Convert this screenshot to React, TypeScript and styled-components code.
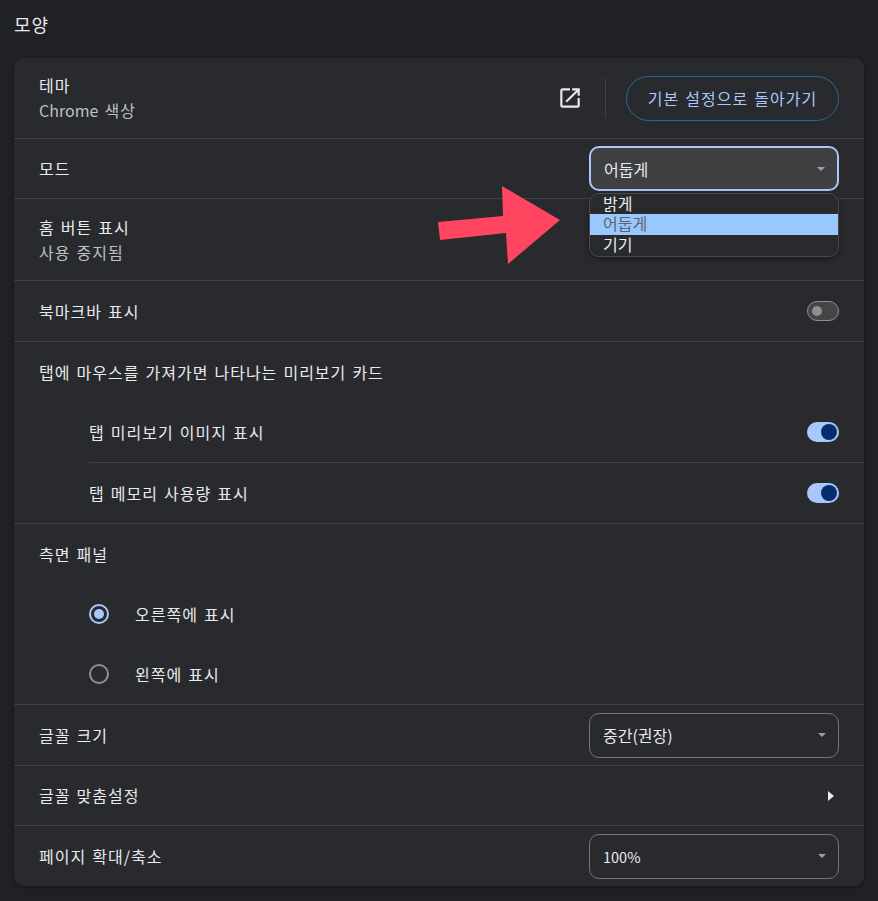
import React, { FC } from 'react';
import styled, { createGlobalStyle } from 'styled-components';

const GlobalStyle = createGlobalStyle`
  html, body {
    margin: 0;
    padding: 0;
    background: #202124;
  }
  body {
    font-family: "Noto Sans CJK KR", "Noto Sans", sans-serif;
    color: #e8eaed;
    font-size: 16px;
    letter-spacing: 1px;
    word-spacing: 1.5px;
  }
`;

const Page = styled.div`
  width: 878px;
  height: 901px;
  padding: 0 14px;
  box-sizing: border-box;
  overflow: hidden;
`;

const PageTitle = styled.h2`
  margin: 0;
  height: 58px;
  padding-top: 10px;
  box-sizing: border-box;
  font-size: 18px;
  line-height: 28px;
  font-weight: 400;
  color: #e8eaed;
`;

const Card = styled.section`
  position: relative;
  width: 850px;
  background: #292a2d;
  border-radius: 10px;
  box-shadow: 0 1px 3px 1px rgba(0, 0, 0, 0.2);
`;

const Row = styled.div<{ $height: number; $indent?: boolean; $nested?: boolean; $noBorder?: boolean }>`
  display: flex;
  align-items: center;
  justify-content: space-between;
  box-sizing: border-box;
  height: ${(props) => props.$height}px;
  margin-left: ${(props) => (props.$nested ? '75px' : '0')};
  padding-left: ${(props) => (props.$nested ? '0' : props.$indent ? '75px' : '25px')};
  padding-right: 25px;
  border-bottom: ${(props) => (props.$noBorder ? '0' : '1px solid #3f4042')};
`;

const Label = styled.div`
  font-size: 16px;
  line-height: 25px;
  color: #e8eaed;
`;

const SubLabel = styled.div`
  font-size: 16px;
  line-height: 25px;
  color: #bdc1c6;
`;

const LatinText = styled.span`
  letter-spacing: 0;
`;

const Actions = styled.div`
  display: flex;
  align-items: center;
`;

const IconButton = styled.div`
  display: flex;
  width: 26px;
  height: 26px;
  margin-right: 22px;
`;

const Divider = styled.div`
  width: 1px;
  height: 40px;
  margin-right: 20px;
  background: #3f4042;
`;

const OutlineButton = styled.button`
  width: 213px;
  height: 45px;
  padding: 0;
  border: 1px solid #1f6f92;
  border-radius: 23px;
  background: transparent;
  color: #a8c7fa;
  font-family: inherit;
  font-size: 16px;
  letter-spacing: 1px;
  word-spacing: 1.5px;
`;

const Select = styled.div<{ $open?: boolean; $latin?: boolean }>`
  display: flex;
  align-items: center;
  justify-content: space-between;
  box-sizing: border-box;
  width: 250px;
  height: 45px;
  padding: 0 12px 0 13px;
  border: ${(props) => (props.$open ? '2px solid #a8c7fa' : '1px solid #747578')};
  border-radius: 10px;
  background: ${(props) => (props.$open ? '#3f4042' : 'transparent')};
  font-size: ${(props) => (props.$latin ? '14.5px' : '16px')};
  letter-spacing: 0;
  color: #e8eaed;
`;

const Caret = styled.span`
  width: 0;
  height: 0;
  border-left: 4.5px solid transparent;
  border-right: 4.5px solid transparent;
  border-top: 4px solid #9aa0a6;
`;

const Popup = styled.ul`
  position: absolute;
  left: 575px;
  top: 135px;
  width: 250px;
  height: 64px;
  margin: 0;
  padding: 0;
  box-sizing: border-box;
  list-style: none;
  background: #292a2d;
  border: 1px solid #4a4b4e;
  border-radius: 10px;
  box-shadow: 0 2px 6px rgba(0, 0, 0, 0.35);
`;

const PopupItem = styled.li<{ $selected?: boolean }>`
  height: ${(props) => (props.$selected ? '21px' : '20px')};
  padding-left: 13px;
  font-size: 16px;
  line-height: 19px;
  letter-spacing: 0;
  background: ${(props) => (props.$selected ? '#99c8ff' : 'transparent')};
  color: ${(props) => (props.$selected ? '#5f6368' : '#e8eaed')};
`;

const ArrowMark = styled.svg`
  position: absolute;
  left: 424px;
  top: 126px;
`;

const Toggle = styled.div<{ $on?: boolean }>`
  display: flex;
  align-items: center;
  justify-content: ${(props) => (props.$on ? 'flex-end' : 'flex-start')};
  box-sizing: border-box;
  width: 32px;
  height: 20px;
  padding: ${(props) => (props.$on ? '0 2px' : '0 4px')};
  border-radius: 10px;
  border: ${(props) => (props.$on ? '0' : '1px solid #8e918f')};
  background: ${(props) => (props.$on ? '#a8c7fa' : '#444547')};
`;

const Knob = styled.span<{ $on?: boolean }>`
  width: ${(props) => (props.$on ? '16px' : '10px')};
  height: ${(props) => (props.$on ? '16px' : '10px')};
  border-radius: 50%;
  background: ${(props) => (props.$on ? '#062e6f' : '#8e918f')};
`;

const RadioRow = styled.div<{ $last?: boolean }>`
  display: flex;
  align-items: center;
  gap: 26px;
  box-sizing: border-box;
  height: ${(props) => (props.$last ? '61px' : '60px')};
  padding-left: 75px;
  border-bottom: ${(props) => (props.$last ? '1px solid #3f4042' : '0')};
`;

const Radio = styled.span<{ $checked?: boolean }>`
  display: flex;
  align-items: center;
  justify-content: center;
  box-sizing: border-box;
  width: 20px;
  height: 20px;
  border-radius: 50%;
  border: 2px solid ${(props) => (props.$checked ? '#a8c7fa' : '#8e918f')};

  &::after {
    content: '';
    display: ${(props) => (props.$checked ? 'block' : 'none')};
    width: 10px;
    height: 10px;
    border-radius: 50%;
    background: #a8c7fa;
  }
`;

const RightTriangle = styled.span`
  width: 0;
  height: 0;
  margin-right: 5px;
  border-top: 5px solid transparent;
  border-bottom: 5px solid transparent;
  border-left: 6px solid #e8eaed;
`;

const ToggleSwitch: FC<{ on?: boolean }> = ({ on }) => (
  <Toggle $on={on}>
    <Knob $on={on} />
  </Toggle>
);

const App: FC = () => (
  <Page>
    <GlobalStyle />
    <PageTitle>모양</PageTitle>
    <Card>
      <Row $height={81}>
        <div>
          <Label>테마</Label>
          <SubLabel>
            <LatinText>Chrome</LatinText> 색상
          </SubLabel>
        </div>
        <Actions>
          <IconButton>
            <svg width="26" height="26" viewBox="0 0 24 24" fill="#e8eaed">
              <path d="M19 19H5V5h7V3H5c-1.11 0-2 .9-2 2v14c0 1.1.89 2 2 2h14c1.1 0 2-.9 2-2v-7h-2v7zM14 3v2h3.59l-9.83 9.83 1.41 1.41L19 6.41V10h2V3h-7z" />
            </svg>
          </IconButton>
          <Divider />
          <OutlineButton>기본 설정으로 돌아가기</OutlineButton>
        </Actions>
      </Row>
      <Row $height={60}>
        <Label>모드</Label>
        <Select $open>
          어둡게
          <Caret />
        </Select>
      </Row>
      <Row $height={82}>
        <div>
          <Label>홈 버튼 표시</Label>
          <SubLabel>사용 중지됨</SubLabel>
        </div>
      </Row>
      <Row $height={61}>
        <Label>북마크바 표시</Label>
        <ToggleSwitch />
      </Row>
      <Row $height={60} $noBorder>
        <Label>탭에 마우스를 가져가면 나타나는 미리보기 카드</Label>
      </Row>
      <Row $height={61} $nested>
        <Label>탭 미리보기 이미지 표시</Label>
        <ToggleSwitch on />
      </Row>
      <Row $height={61} $indent>
        <Label>탭 메모리 사용량 표시</Label>
        <ToggleSwitch on />
      </Row>
      <Row $height={60} $noBorder>
        <Label>측면 패널</Label>
      </Row>
      <RadioRow>
        <Radio $checked />
        <Label>오른쪽에 표시</Label>
      </RadioRow>
      <RadioRow $last>
        <Radio />
        <Label>왼쪽에 표시</Label>
      </RadioRow>
      <Row $height={61}>
        <Label>글꼴 크기</Label>
        <Select>
          중간(권장)
          <Caret />
        </Select>
      </Row>
      <Row $height={60}>
        <Label>글꼴 맞춤설정</Label>
        <RightTriangle />
      </Row>
      <Row $height={60} $noBorder>
        <Label>페이지 확대/축소</Label>
        <Select $latin>
          100%
          <Caret />
        </Select>
      </Row>
      <ArrowMark width="126" height="84" viewBox="0 0 126 84">
        <polygon points="0,38 65,32 64,2 122,36 70,80 68,49 2,56" fill="#ff4560" />
      </ArrowMark>
      <Popup>
        <PopupItem>밝게</PopupItem>
        <PopupItem $selected>어둡게</PopupItem>
        <PopupItem>기기</PopupItem>
      </Popup>
    </Card>
  </Page>
);

export default App;
